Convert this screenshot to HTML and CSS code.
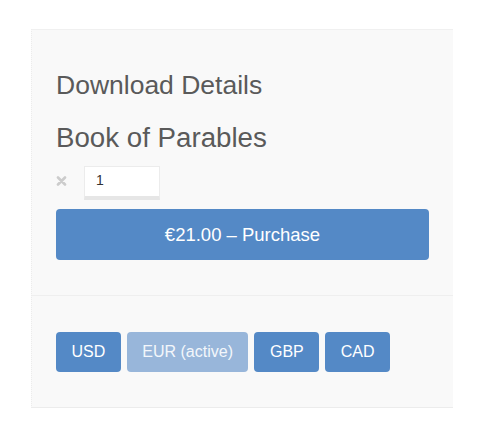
FILE: index.html
```html
<!DOCTYPE html>
<html lang="en">
<head>
    <meta charset="UTF-8">
    <meta name="viewport" content="width=device-width, initial-scale=1.0">
    <title>Download Details</title>
    <link rel="stylesheet" href="styles.css">
</head>
<body>
<div class="panel">
    <div class="panel-body">
        <h2>Download Details</h2>
        <h3>Book of Parables</h3>
        <div class="qty-row">
            <svg class="qty-remove" width="11" height="10" viewBox="0 0 11 10">
                <path d="M2 1.5 L9 8.5 M9 1.5 L2 8.5" stroke="#cccccc" stroke-width="2.6" stroke-linecap="round"/>
            </svg>
            <input type="text" class="qty-input" value="1">
        </div>
        <button class="purchase-button">€21.00 – Purchase</button>
    </div>
    <div class="panel-footer">
        <button class="currency-button">USD</button>
        <button class="currency-button active">EUR (active)</button>
        <button class="currency-button">GBP</button>
        <button class="currency-button">CAD</button>
    </div>
</div>
</body>
</html>
```

FILE: styles.css
```css
body {
    font-family: "Liberation Sans", "Arial", sans-serif;
    background-color: #ffffff;
    color: #555555;
    margin: 0;
    padding: 29px 0 0 31px;
}

.panel {
    width: 422px;
    background-color: #f9f9f9;
    border-top: 1px solid #f0f0f0;
    border-bottom: 1px solid #ececec;
    border-left: 1px dotted #ececec;
    box-sizing: border-box;
}

.panel-body {
    padding: 41px 24px 35px 24px;
    border-bottom: 1px solid #efefef;
}

h2 {
    margin: 0;
    font-size: 26.5px;
    line-height: 29px;
    font-weight: normal;
    color: #5a5a5a;
}

h3 {
    margin: 22px 0 0 0;
    font-size: 27.7px;
    line-height: 31px;
    font-weight: normal;
    color: #5a5a5a;
}

.qty-row {
    display: flex;
    align-items: center;
    margin-top: 13px;
    height: 34px;
}

.qty-remove {
    margin: 0 17px 0 0;
    position: relative;
    top: -2px;
}

.qty-input {
    width: 76px;
    height: 34px;
    box-sizing: border-box;
    padding: 0 0 4px 11px;
    border: 1px solid #ececec;
    border-bottom: 4px solid #e6e6e6;
    background-color: #ffffff;
    color: #333333;
    font-family: "Liberation Sans", "Arial", sans-serif;
    font-size: 14px;
    outline: none;
}

.purchase-button {
    display: block;
    width: 100%;
    height: 51px;
    margin-top: 9px;
    background-color: #5489c6;
    color: #ffffff;
    border: none;
    border-radius: 4px;
    font-family: "Liberation Sans", "Arial", sans-serif;
    font-size: 18.5px;
    cursor: pointer;
}

.panel-footer {
    display: flex;
    gap: 6px;
    padding: 36px 24px 35px 24px;
}

.currency-button {
    height: 40px;
    padding: 0 15.5px;
    background-color: #5489c6;
    color: #ffffff;
    border: none;
    border-radius: 4px;
    font-family: "Liberation Sans", "Arial", sans-serif;
    font-size: 16px;
    cursor: pointer;
}

.currency-button.active {
    background-color: #98b6da;
    color: #f3f6fb;
}
```
